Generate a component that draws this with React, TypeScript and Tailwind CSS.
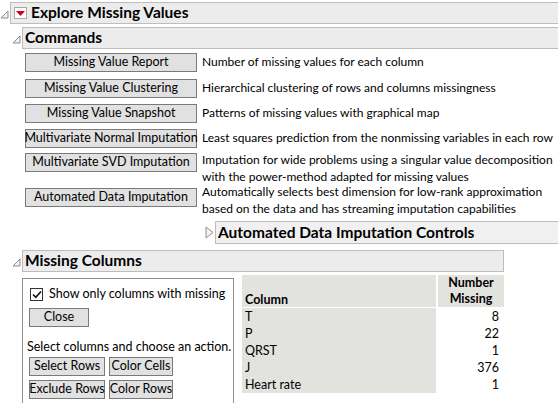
import React from 'react';

const font = { fontFamily: 'Lato, "Noto Sans", sans-serif' };

function OpenTri() {
  return (
    <svg width="9" height="9" viewBox="0 0 9 9" className="shrink-0">
      <polygon points="8,1 8,8 1,8" fill="#f4f4f4" stroke="#8a8a8a" strokeWidth="1" />
    </svg>
  );
}

function ClosedTri() {
  return (
    <svg width="9" height="13" viewBox="0 0 9 13" className="shrink-0">
      <polygon points="1,1 8,6.5 1,12" fill="#f4f4f4" stroke="#8a8a8a" strokeWidth="1" />
    </svg>
  );
}

function Btn({ label, className = '' }: { label: string; className?: string }) {
  return (
    <div
      className={`h-[19px] flex items-center justify-center border border-[#7a7a7a] bg-[#e1e1e1] text-[12.5px] text-black leading-none whitespace-nowrap ${className}`}
    >
      {label}
    </div>
  );
}

const commands: { label: string; desc: string[]; h: string; dt: string }[] = [
  { label: 'Missing Value Report', desc: ['Number of missing values for each column'], h: 'h-[26px]', dt: 'mt-[1px]' },
  { label: 'Missing Value Clustering', desc: ['Hierarchical clustering of rows and columns missingness'], h: 'h-[25px]', dt: 'mt-[1px]' },
  { label: 'Missing Value Snapshot', desc: ['Patterns of missing values with graphical map'], h: 'h-[25px]', dt: 'mt-[1px]' },
  { label: 'Multivariate Normal Imputation', desc: ['Least squares prediction from the nonmissing variables in each row'], h: 'h-[24px]', dt: 'mt-[1px]' },
  {
    label: 'Multivariate SVD Imputation',
    desc: ['Imputation for wide problems using a singular value decomposition', 'with the power-method adapted for missing values'],
    h: 'h-[35px]',
    dt: '-mt-[1px]',
  },
  {
    label: 'Automated Data Imputation',
    desc: ['Automatically selects best dimension for low-rank approximation', 'based on the data and has streaming imputation capabilities'],
    h: 'h-[33px]',
    dt: '-mt-[4px]',
  },
];

const rows: [string, number][] = [
  ['T', 8],
  ['P', 22],
  ['QRST', 1],
  ['J', 376],
  ['Heart rate', 1],
];

export default function App() {
  return (
    <div className="w-[558px] h-[403px] overflow-hidden bg-white text-black text-[12px]" style={font}>
      {/* Explore Missing Values */}
      <div className="flex items-start pt-[2px]">
        <div className="w-[10px] pt-[8px]">
          <OpenTri />
        </div>
        <div className="flex-1 h-[22px] flex items-center border border-r-0 border-[#bdbdbd] bg-[#ececec]">
          <div className="ml-[3px] w-[13px] h-[12px] flex items-center justify-center border border-[#a8a8a8] bg-white">
            <svg width="9" height="5" viewBox="0 0 9 5">
              <polygon points="0,0 9,0 4.5,5" fill="#d0021b" />
            </svg>
          </div>
          <span className="ml-[4px] text-[15.5px] font-bold leading-none">Explore Missing Values</span>
        </div>
      </div>

      {/* Commands */}
      <div className="flex items-start mt-[3px]">
        <div className="w-[22px] pl-[12px] pt-[8px]">
          <OpenTri />
        </div>
        <div className="flex-1 h-[22px] flex items-center border border-r-0 border-[#bdbdbd] bg-[#ececec]">
          <span className="ml-[2px] text-[15.5px] font-bold leading-none">Commands</span>
        </div>
      </div>

      <div className="pl-[25px] pt-[4px] flex flex-col">
        {commands.map((c) => (
          <div key={c.label} className={`flex items-start ${c.h}`}>
            <Btn label={c.label} className="w-[172px] shrink-0" />
            <div className={`ml-[5px] leading-[16.5px] ${c.dt}`}>
              {c.desc.map((d) => (
                <div key={d} className="whitespace-nowrap">{d}</div>
              ))}
            </div>
          </div>
        ))}
      </div>

      {/* Automated Data Imputation Controls */}
      <div className="flex items-center ml-[205px]">
        <ClosedTri />
        <div className="ml-[1px] flex-1 h-[23px] flex items-center border border-r-0 border-[#bdbdbd] bg-[#f0f0f0]">
          <span className="ml-[2px] text-[15.5px] font-bold leading-none">Automated Data Imputation Controls</span>
        </div>
      </div>

      {/* Missing Columns */}
      <div className="flex items-start mt-[6px]">
        <div className="w-[22px] pl-[12px] pt-[8px]">
          <OpenTri />
        </div>
        <div className="w-[482px] h-[22px] flex items-center border border-[#bdbdbd] bg-[#ececec]">
          <span className="ml-[2px] text-[15.5px] font-bold leading-none">Missing Columns</span>
        </div>
      </div>

      <div className="flex items-start ml-[22px] mt-[6px]">
        <div className="w-[212px] h-[140px] shrink-0 border border-[#8f8f8f] pl-[7px] pt-[9px]">
          <label className="flex items-center gap-[6px]">
            <span className="w-[13px] h-[13px] border border-[#333] bg-white flex items-center justify-center">
              <svg width="10" height="9" viewBox="0 0 10 9">
                <polyline points="1,4.5 3.8,7.3 9,1.5" fill="none" stroke="#111" strokeWidth="1.7" />
              </svg>
            </span>
            <span className="text-[12.5px] leading-none whitespace-nowrap">Show only columns with missing</span>
          </label>
          <Btn label="Close" className="w-[60px] mt-[7px] -ml-[1px]" />
          <div className="text-[12.5px] leading-none mt-[14px] -ml-[3px] whitespace-nowrap">Select columns and choose an action.</div>
          <div className="grid grid-cols-[76px_64px] gap-x-[4px] gap-y-[4px] mt-[3px] -ml-[1px]">
            <Btn label="Select Rows" />
            <Btn label="Color Cells" />
            <Btn label="Exclude Rows" />
            <Btn label="Color Rows" />
          </div>
        </div>

        <div className="ml-[8px] -mt-[3px] w-[262px] text-[12.5px]">
          <div className="flex bg-[#e2e2de] h-[32px]">
            <div className="w-[196px] flex items-end pl-[3px] pb-[1px] font-bold leading-none border-r-2 border-white">Column</div>
            <div className="flex-1 flex flex-col items-center justify-center font-bold leading-[16px] text-center">
              <span>Number</span>
              <span>Missing</span>
            </div>
          </div>
          <div className="h-[1px] bg-white" />
          {rows.map(([n, v]) => (
            <div key={n} className="flex h-[17px] leading-[17px]">
              <div className="w-[196px] bg-[#e2e2de] pl-[3px] border-r-2 border-white">{n}</div>
              <div className="flex-1 text-right pr-[5px]">{v}</div>
            </div>
          ))}
        </div>
      </div>
    </div>
  );
}
